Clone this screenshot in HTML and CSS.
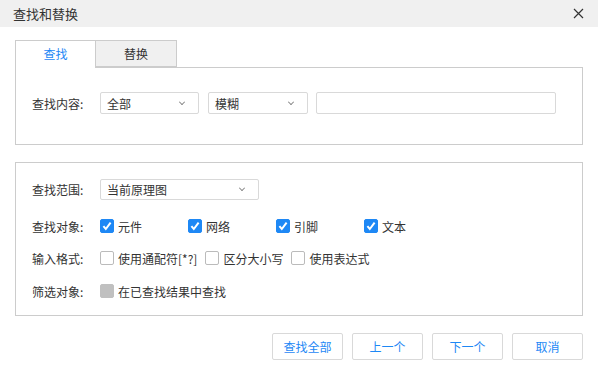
FILE: index.html
```html
<!DOCTYPE html>
<html lang="zh-CN">
    <head>
        <meta charset="utf-8">
        <link rel="stylesheet" href="styles.css">
    </head>
    <body>
        <div class="dialog">
            <div class="title-bar">
                <span class="title">查找和替换</span>
                <span class="close">
                    <svg width="11" height="11" viewBox="0 0 11 11"><path d="M1 1L10 10M10 1L1 10" stroke="#333" stroke-width="1.2" fill="none"/></svg>
                </span>
            </div>
            <div class="content">
                <div class="tabs">
                    <div class="tab active">查找</div>
                    <div class="tab">替换</div>
                </div>
                <div class="panel panel-find">
                    <div class="row">
                        <span class="label">查找内容:</span>
                        <div class="select sel-a">全部<span class="arrow"></span></div>
                        <div class="select sel-b">模糊<span class="arrow"></span></div>
                        <div class="input"></div>
                    </div>
                </div>

                <div class="panel panel-opts">
                    <div class="row row-range">
                        <span class="label">查找范围:</span>
                        <div class="select sel-range">当前原理图<span class="arrow"></span></div>
                    </div>
                    <div class="row row-obj">
                        <span class="label">查找对象:</span>
                        <label class="check fixed"><span class="box on"></span>元件</label>
                        <label class="check fixed"><span class="box on"></span>网络</label>
                        <label class="check fixed"><span class="box on"></span>引脚</label>
                        <label class="check fixed"><span class="box on"></span>文本</label>
                    </div>
                    <div class="row row-fmt">
                        <span class="label">输入格式:</span>
                        <label class="check"><span class="box"></span>使用通配符[*?]</label>
                        <label class="check"><span class="box"></span>区分大小写</label>
                        <label class="check"><span class="box"></span>使用表达式</label>
                    </div>
                    <div class="row row-filter">
                        <span class="label">筛选对象:</span>
                        <label class="check"><span class="box off"></span>在已查找结果中查找</label>
                    </div>
                </div>

                <div class="buttons">
                    <div class="btn">查找全部</div>
                    <div class="btn">上一个</div>
                    <div class="btn">下一个</div>
                    <div class="btn">取消</div>
                </div>
            </div>
        </div>
    </body>
</html>
```

FILE: styles.css
```css
* {
    margin: 0;
    padding: 0;
    box-sizing: border-box;
}

body {
    width: 598px;
    height: 382px;
    background: #fff;
    font-family: "Noto Sans CJK SC", "Noto Sans", sans-serif;
    font-size: 12px;
    color: #333;
}

.title-bar {
    height: 27px;
    background: #f0f0f0;
    display: flex;
    align-items: center;
    justify-content: space-between;
    padding: 0 13px;
}

.title {
    font-size: 13px;
    color: #333;
}

.close {
    display: flex;
    margin-right: 1px;
}

.content {
    padding: 13px 15px 0;
}

.tabs {
    display: flex;
    height: 27px;
}

.tab {
    width: 81px;
    height: 28px;
    border: 1px solid #ccc;
    border-bottom: 0;
    background: #f0f0f0;
    text-align: center;
    line-height: 26px;
    position: relative;
    z-index: 1;
}

.tab + .tab {
    border-left: 0;
    height: 27px;
    border-bottom: 1px solid #ccc;
}

.tab.active {
    background: #fff;
    color: #1e88f5;
}

.panel {
    border: 1px solid #ccc;
}

.panel-find {
    height: 78px;
    padding: 24px 16px 0;
}

.row {
    display: flex;
    align-items: center;
}

.label {
    width: 68px;
    flex: none;
}

.select {
    height: 22px;
    border: 1px solid #d9d9d9;
    border-radius: 2px;
    padding: 0 6px;
    display: flex;
    align-items: center;
    justify-content: space-between;
    color: #333;
}

.arrow {
    width: 6px;
    height: 6px;
    border-right: 1px solid #666;
    border-bottom: 1px solid #666;
    transform: rotate(45deg) scale(0.7);
    margin: -3px 7px 0 0;
}

.sel-a {
    width: 99px;
}

.sel-b {
    width: 100px;
    margin-left: 9px;
}

.input {
    width: 240px;
    height: 22px;
    margin-left: 8px;
    border: 1px solid #d9d9d9;
    border-radius: 2px;
}

.panel-opts {
    margin-top: 17px;
    height: 154px;
    padding: 16px 16px 0;
}

.sel-range {
    width: 159px;
    height: 21px;
}

.row-obj {
    margin-top: 16px;
    height: 20px;
}

.row-fmt {
    margin-top: 12px;
    height: 20px;
}

.row-filter {
    margin-top: 13px;
    height: 20px;
}

.check {
    display: flex;
    align-items: center;
    margin-right: 8px;
}

.check.fixed {
    width: 88px;
    margin-right: 0;
}

.box {
    width: 14px;
    height: 14px;
    border: 1px solid #bbb;
    border-radius: 2px;
    margin-right: 4px;
    flex: none;
    background: #fff;
}

.box.on {
    border-color: #1e88f5;
    background: #1e88f5 url("data:image/svg+xml,%3Csvg xmlns='http://www.w3.org/2000/svg' width='14' height='14' viewBox='0 0 14 14'%3E%3Cpath d='M3.4 7.2L5.8 10L10.6 3.6' stroke='white' stroke-width='2' fill='none'/%3E%3C/svg%3E") center/14px no-repeat;
}

.box.off {
    border-color: #c0c0c0;
    background: #c0c0c0;
}

.buttons {
    display: flex;
    justify-content: flex-end;
    gap: 9px;
    margin-top: 17px;
}

.btn {
    width: 71px;
    height: 27px;
    border: 1px solid #d9d9d9;
    border-radius: 2px;
    color: #1e88f5;
    text-align: center;
    line-height: 25px;
}
```
